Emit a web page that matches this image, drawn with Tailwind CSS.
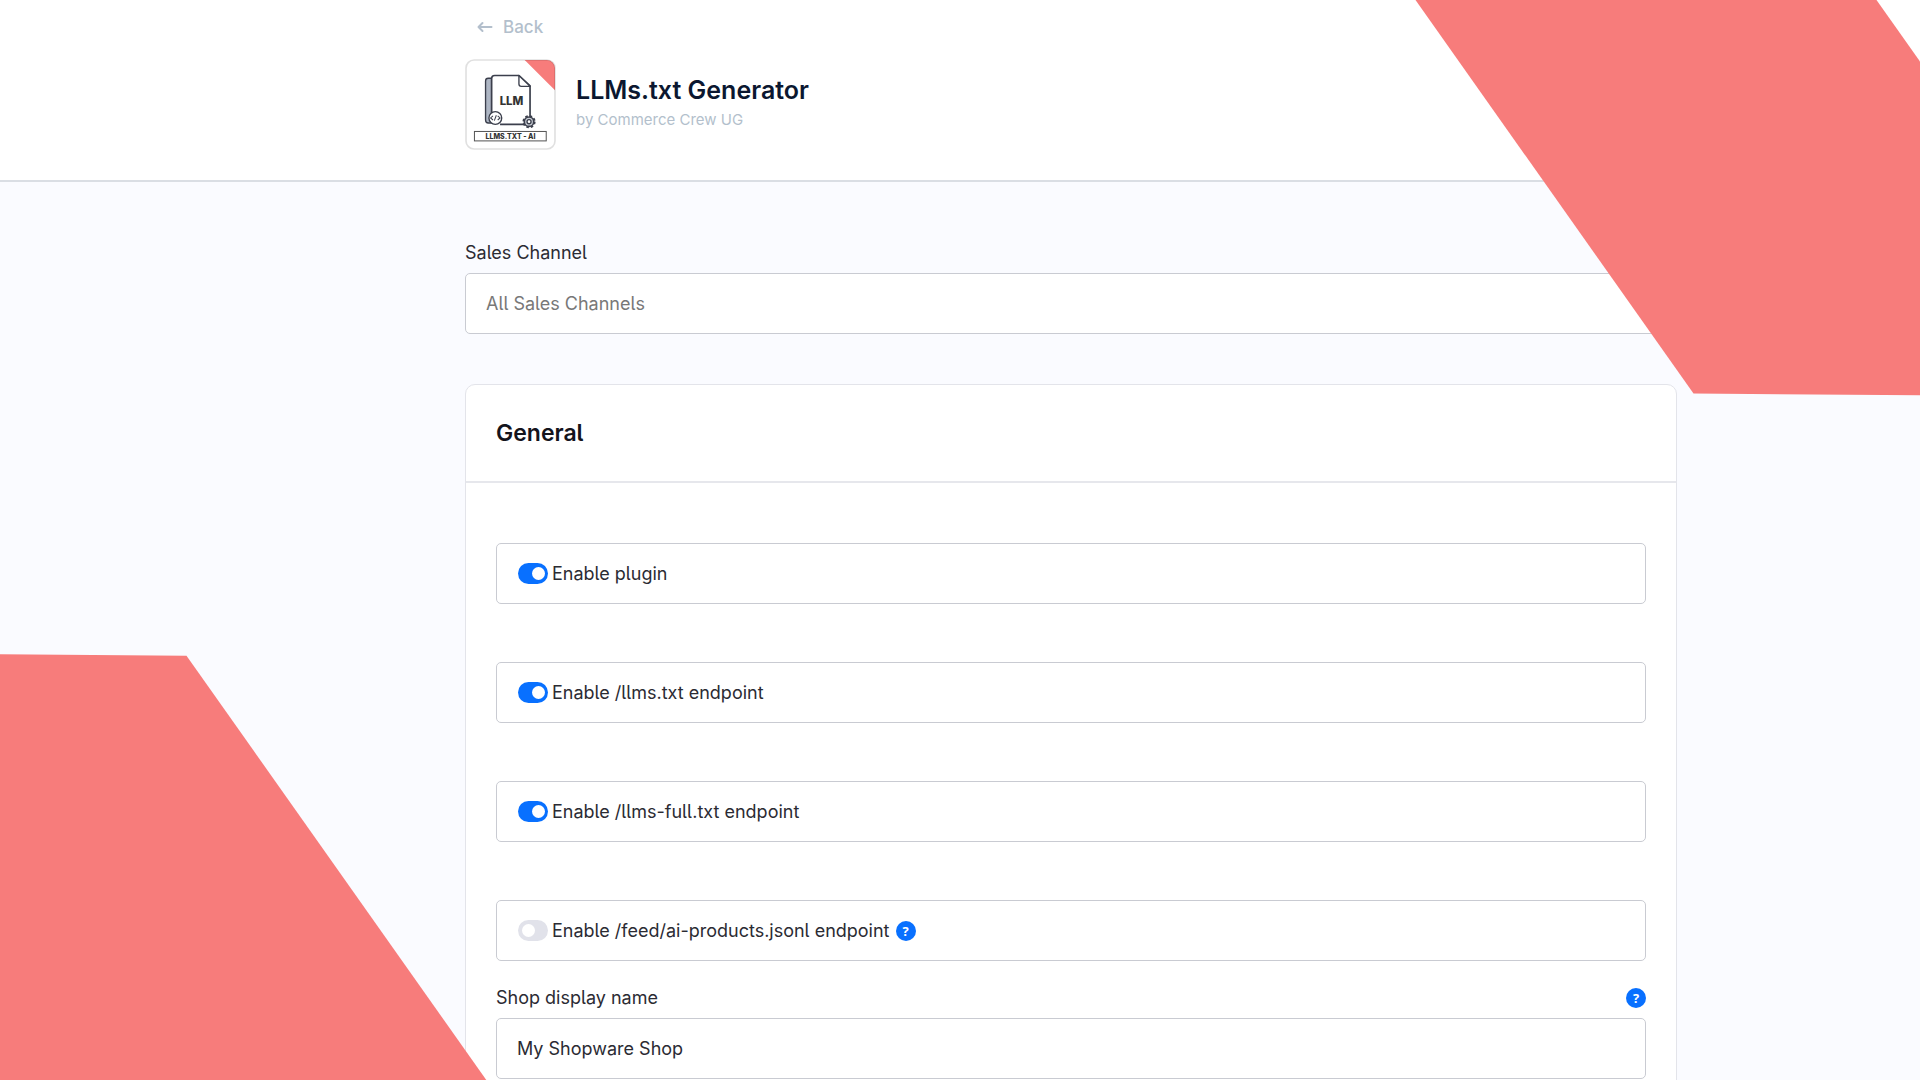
<!DOCTYPE html>
<html lang="en">

<head>
  <meta charset="UTF-8" />
  <meta name="viewport" content="width=device-width, initial-scale=1.0" />
  <title>LLMs.txt Generator</title>

  <script src="https://cdn.jsdelivr.net/npm/@tailwindcss/browser@4"></script>
</head>

<body class="relative h-screen overflow-hidden bg-[#fafbff] font-['Inter',sans-serif] [font-feature-settings:'cv05'] text-[18px] leading-6 text-[#2b2b33]">

  <!-- Header -->
  <header class="bg-white border-b-2 border-[#dadee4] pl-[222px]">
    <div class="max-w-[1212px] mx-auto pt-[15px] pb-[30px]">
      <a href="#" class="inline-flex items-center gap-2.5 pl-3 leading-6 font-medium text-[17px] text-[#b3bfcc] align-top">
        <svg class="w-4 h-3" viewBox="0 0 16 12" fill="none" stroke="currentColor" stroke-width="2" stroke-linecap="round" stroke-linejoin="round">
          <path d="M14.500 6H1.500M5.500 2L1.500 6L5.500 10" />
        </svg>
        Back
      </a>

      <div class="flex gap-5 mt-5">
        <!-- Plugin icon -->
        <svg class="w-[91px] h-[91px] shrink-0" viewBox="0 0 270 270" fill="none" role="img" aria-label="Plugin icon">
          <rect x="3" y="3" width="264" height="264" rx="24" fill="#fff" />
          <path d="M177 3H243A24 24 0 0 1 267 27V93Z" fill="#f77c7b" />
          <rect x="3" y="3" width="264" height="264" rx="24" stroke="#000" stroke-opacity=".12" stroke-width="5" />
          <path d="M79 57H69Q61 57 61 65V181Q61 190 69 190H79Z" fill="#aeb6c4" stroke="#3b3f4c" stroke-width="4" />
          <path d="M79 180V58Q79 49 88 49H160L193 80V185Q193 194 184 194H104" fill="#fff" stroke="#3b3f4c" stroke-width="5" stroke-linejoin="round" />
          <path d="M160 49V74Q160 81 167 81H193Z" fill="#fff" stroke="#3b3f4c" stroke-width="4" stroke-linejoin="round" />
          <text x="138" y="135" text-anchor="middle" font-family="Inter, sans-serif" font-size="34" font-weight="800" fill="#333">LLM</text>
          <circle cx="90" cy="175" r="19" fill="#fff" stroke="#3b3f4c" stroke-width="4" />
          <path d="M83 169L76 175L83 181M97 169L104 175L97 181M93 167L87 183" stroke="#3b3f4c" stroke-width="3" />
          <circle cx="190" cy="186" r="17" stroke="#3b3f4c" stroke-width="5" stroke-dasharray="7.350 6" />
          <circle cx="190" cy="186" r="14" fill="#c8ccd4" stroke="#3b3f4c" stroke-width="5" />
          <circle cx="190" cy="186" r="6" fill="#fff" stroke="#3b3f4c" stroke-width="4" />
          <rect x="28" y="215" width="213" height="28" fill="#fff" stroke="#555" stroke-width="3" />
          <text x="135" y="236" text-anchor="middle" font-family="Inter, sans-serif" font-size="21" font-weight="800" fill="#333">LLMS.TXT - AI</text>
        </svg>
        <div class="pt-[15px]">
          <h1 class="text-[25px] leading-8 font-semibold text-[#0b1730]">LLMs.txt Generator</h1>
          <p class="text-[15px] leading-7 text-[#b3bfcc]">by Commerce Crew UG</p>
        </div>
      </div>
    </div>
  </header>

  <!-- Configuration -->
  <main class="pl-[222px]">
    <form class="max-w-[1212px] mx-auto pt-[59px]">
      <label for="sales-channel" class="block">Sales Channel</label>
      <input id="sales-channel" type="text" placeholder="All Sales Channels"
        class="block w-full h-[61px] mt-2 px-5 bg-white border border-[#c9cbd2] rounded-[5px] placeholder:text-[#787878]" />

      <section class="mt-[50px] bg-white border border-[#e3e4ea] rounded-[10px]">
        <h2 class="px-[30px] py-8 text-[23px] leading-8 font-semibold text-[#14141c] border-b-2 border-[#e6e7ec]">General</h2>

        <div class="px-[30px] pt-[60px] pb-8">
          <div class="flex flex-col gap-[58px]">
            <div class="flex items-center h-[61px] px-[21px] border border-[#c9cbd2] rounded-[5px]">
              <input id="enable-plugin" type="checkbox" role="switch" checked
                class="appearance-none w-[30px] h-[21px] rounded-full bg-[#e1e2ea] checked:bg-[#0870ff] before:block before:size-[13px] before:m-1 before:rounded-full before:bg-white checked:before:ml-3.5" />
              <label for="enable-plugin" class="pl-1">Enable plugin</label>
            </div>

            <div class="flex items-center h-[61px] px-[21px] border border-[#c9cbd2] rounded-[5px]">
              <input id="enable-llms" type="checkbox" role="switch" checked
                class="appearance-none w-[30px] h-[21px] rounded-full bg-[#e1e2ea] checked:bg-[#0870ff] before:block before:size-[13px] before:m-1 before:rounded-full before:bg-white checked:before:ml-3.5" />
              <label for="enable-llms" class="pl-1">Enable /llms.txt endpoint</label>
            </div>

            <div class="flex items-center h-[61px] px-[21px] border border-[#c9cbd2] rounded-[5px]">
              <input id="enable-llms-full" type="checkbox" role="switch" checked
                class="appearance-none w-[30px] h-[21px] rounded-full bg-[#e1e2ea] checked:bg-[#0870ff] before:block before:size-[13px] before:m-1 before:rounded-full before:bg-white checked:before:ml-3.5" />
              <label for="enable-llms-full" class="pl-1">Enable /llms-full.txt endpoint</label>
            </div>

            <div class="flex items-center h-[61px] px-[21px] border border-[#c9cbd2] rounded-[5px]">
              <input id="enable-feed" type="checkbox" role="switch"
                class="appearance-none w-[30px] h-[21px] rounded-full bg-[#e1e2ea] checked:bg-[#0870ff] before:block before:size-[13px] before:m-1 before:rounded-full before:bg-white checked:before:ml-3.5" />
              <label for="enable-feed" class="pl-1">Enable /feed/ai-products.jsonl endpoint</label>
              <button type="button" class="ml-1.5 size-5 rounded-full bg-[#0870ff] text-white text-[13px] leading-5 font-bold font-['Open_Sans',sans-serif]">?</button>
            </div>
          </div>

          <div class="flex items-center justify-between mt-[25px]">
            <label for="shop-name">Shop display name</label>
            <button type="button" class="size-5 rounded-full bg-[#0870ff] text-white text-[13px] leading-5 font-bold font-['Open_Sans',sans-serif]">?</button>
          </div>
          <input id="shop-name" type="text" value="My Shopware Shop"
            class="block w-full h-[61px] mt-2 px-5 bg-white border border-[#c9cbd2] rounded-[5px]" />
        </div>
      </section>
    </form>
  </main>

  <!-- Decorative shapes -->
  <svg class="absolute top-0 right-0 w-[505px] h-[396px]" viewBox="0 0 505 396" fill="#f77c7b" aria-hidden="true">
    <path d="M0.500 0H461.500L505 61.500V395.300L278.500 393.500Z" />
  </svg>
  <svg class="absolute bottom-0 left-0 w-[487px] h-[427px]" viewBox="0 0 487 427" fill="#f77c7b" aria-hidden="true">
    <path d="M0 1.300L186.500 2.700L486.300 427H0Z" />
  </svg>
</body>

</html>
